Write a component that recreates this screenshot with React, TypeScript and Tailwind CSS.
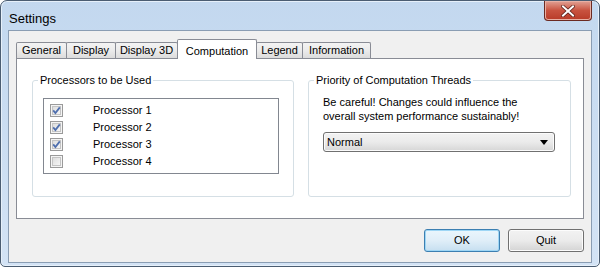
import React from 'react';

const tabs = [
  { label: 'General', w: 'w-[51px]' },
  { label: 'Display', w: 'w-[50px]' },
  { label: 'Display 3D', w: 'w-[63px]' },
  { label: 'Computation', w: 'w-[80px]', active: true },
  { label: 'Legend', w: 'w-[47px]' },
  { label: 'Information', w: 'w-[69px]' },
];

const processors = [
  { name: 'Processor 1', checked: true },
  { name: 'Processor 2', checked: true },
  { name: 'Processor 3', checked: true },
  { name: 'Processor 4', checked: false },
];

const CheckBox: React.FC<{ checked: boolean }> = ({ checked }) => (
  <svg width="13" height="13" viewBox="0 0 13 13">
    <defs>
      <linearGradient id="cbfill" x1="0" y1="0" x2="1" y2="1">
        <stop offset="0" stopColor="#dcdcdc" />
        <stop offset="1" stopColor="#f7f7f7" />
      </linearGradient>
    </defs>
    <rect x="0.5" y="0.5" width="12" height="12" fill="#f4f4f4" stroke="#9a9a9a" />
    <rect x="2.5" y="2.5" width="8" height="8" fill="url(#cbfill)" stroke="#c4c4c4" />
    {checked && (
      <path d="M3.2 6.4 L5.4 9 L9.8 3.4" fill="none" stroke="#4f6fae" strokeWidth="1.8" />
    )}
  </svg>
);

const App: React.FC = () => {
  return (
    <div className="w-[600px] h-[267px] bg-white font-['Liberation_Sans',Arial,sans-serif] text-[11px] text-black">
      <div className="h-full flex flex-col rounded-t-[7px] rounded-b-[5px] border border-[#4b5d72] bg-gradient-to-b from-[#c3d8ef] to-[#d3e3f5] px-[7px] pb-[3px] shadow-[inset_0_0_0_1px_#e6f0fa]">
        {/* Title bar */}
        <div className="h-[29px] flex items-start justify-between">
          <span className="pt-[8px] pl-[1px] text-[13px]">Settings</span>
          <div className="w-[48px] h-[20px] flex items-center justify-center rounded-b-[4px] border border-t-0 border-[#6b2a22] bg-gradient-to-b from-[#e0a195] via-[#c8523f] to-[#b83a28] shadow-[inset_0_0_0_1px_#e8b0a4]">
            <svg width="14" height="12" viewBox="0 0 14 12">
              <path d="M2 1.5 L12 10.5 M12 1.5 L2 10.5" stroke="#5a1f18" strokeWidth="3.6" strokeLinecap="square" />
              <path d="M2 1.5 L12 10.5 M12 1.5 L2 10.5" stroke="#ffffff" strokeWidth="2" strokeLinecap="square" />
            </svg>
          </div>
        </div>

        {/* Client area */}
        <div className="flex-1 flex flex-col bg-[#f0f0f0] border border-[#8a9db3] px-[7px] pt-[8px]">
          {/* Tabs */}
          <div className="flex items-end h-[19px]">
            {tabs.map((t, i) =>
              t.active ? (
                <div
                  key={t.label}
                  className={`${t.w} h-[20px] -mb-px relative z-10 -ml-px flex items-start justify-center pt-[3px] bg-white border border-b-0 border-[#898c95] rounded-t-[2px]`}
                >
                  {t.label}
                </div>
              ) : (
                <div
                  key={t.label}
                  className={`${t.w} h-[16px] ${i > 0 ? '-ml-px' : ''} flex items-center justify-center bg-gradient-to-b from-[#f3f3f3] via-[#ebebeb] to-[#dcdcdc] border border-b-0 border-[#898c95] rounded-t-[2px]`}
                >
                  {t.label}
                </div>
              ),
            )}
          </div>

          {/* Panel */}
          <div className="h-[161px] bg-white border border-[#898c95] flex gap-[14px] pl-[15px] pr-[12px] pt-[14px]">
            <fieldset className="w-[262px] h-[124px] border border-[#d5dfe5] rounded-[3px]">
              <legend className="ml-[5px] px-[2px] leading-[14px]">Processors to be Used</legend>
              <div className="mt-[11px] ml-[10px] mr-[14px] h-[76px] border border-[#828790] bg-white pt-[3px] pl-[6px]">
                {processors.map((p) => (
                  <div key={p.name} className="h-[17px] flex items-center">
                    <CheckBox checked={p.checked} />
                    <span className="ml-[30px]">{p.name}</span>
                  </div>
                ))}
              </div>
            </fieldset>

            <fieldset className="flex-1 h-[124px] border border-[#d5dfe5] rounded-[3px]">
              <legend className="ml-[5px] px-[2px] leading-[14px]">Priority of Computation Threads</legend>
              <div className="pl-[14px] pr-[15px] mt-[8px]">
                <p className="leading-[14px]">
                  Be careful! Changes could influence the
                  <br />
                  overall system performance sustainably!
                </p>
                <div className="mt-[9px] h-[20px] flex items-center justify-between rounded-[3px] border border-[#707070] bg-gradient-to-b from-[#f2f2f2] via-[#ebebeb] to-[#d6d6d6] pl-[3px] pr-[6px] shadow-[inset_0_0_0_1px_#fbfbfb]">
                  <span>Normal</span>
                  <svg width="8" height="5" viewBox="0 0 8 5">
                    <path d="M0 0 L8 0 L4 5 Z" fill="#000" />
                  </svg>
                </div>
              </div>
            </fieldset>
          </div>

          {/* Buttons */}
          <div className="flex justify-end gap-[8px] mt-[10px]">
            <button className="w-[76px] h-[23px] rounded-[3px] border border-[#3c7fb1] bg-gradient-to-b from-[#eaf6fd] via-[#e0eef8] to-[#c6dff0] shadow-[inset_0_0_0_1px_#9ed6f5]">
              OK
            </button>
            <button className="w-[76px] h-[23px] rounded-[3px] border border-[#707070] bg-gradient-to-b from-[#f2f2f2] via-[#ebebeb] to-[#d4d4d4] shadow-[inset_0_0_0_1px_#fcfcfc]">
              Quit
            </button>
          </div>
        </div>
      </div>
    </div>
  );
};

export default App;
